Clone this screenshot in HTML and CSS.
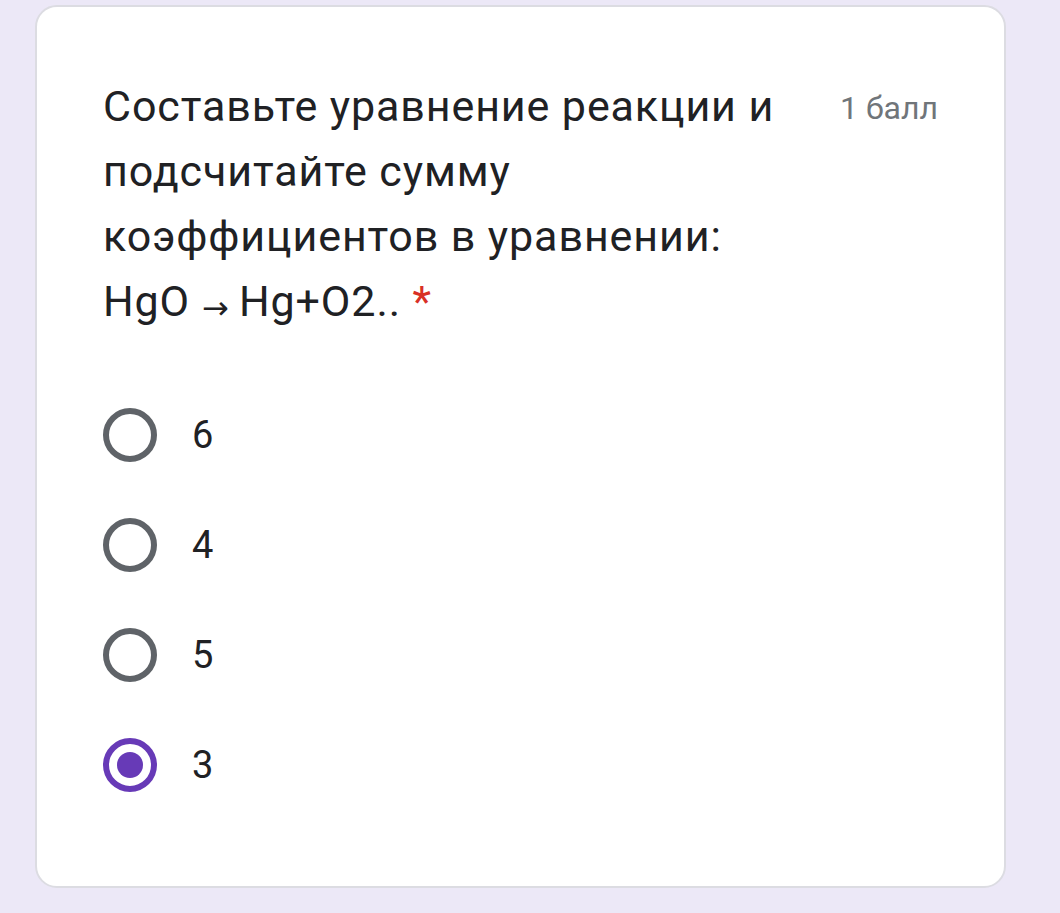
FILE: index.html
```html
<!DOCTYPE html>
<html lang="ru">
<head>
<meta charset="utf-8">
<title>Вопрос</title>
<link rel="stylesheet" href="styles.css">
</head>
<body>
<div class="card">
  <div class="header">
    <div class="title">Составьте уравнение реакции и подсчитайте сумму коэффициентов в уравнении: HgO<span class="arrow">→</span>Hg+O2.. <span class="req">*</span></div>
    <div class="points">1 балл</div>
  </div>
  <div class="options">
    <div class="option"><span class="radio"></span><span class="label">6</span></div>
    <div class="option"><span class="radio"></span><span class="label">4</span></div>
    <div class="option"><span class="radio"></span><span class="label">5</span></div>
    <div class="option"><span class="radio checked"></span><span class="label">3</span></div>
  </div>
</div>
</body>
</html>
```
FILE: styles.css
```css
html, body {
  margin: 0;
  padding: 0;
  background: #ece8f7;
}
body {
  padding: 5px 0 0 35px;
  height: 913px;
  box-sizing: border-box;
}
.card {
  width: 971px;
  height: 883px;
  box-sizing: border-box;
  background: #ffffff;
  border: 2px solid #dcdce2;
  border-radius: 22px;
  padding: 67px 66px 0 66px;
}
.header {
  display: flex;
  justify-content: space-between;
  align-items: flex-start;
}
.title {
  width: 700px;
  font-family: Roboto, "Noto Sans", sans-serif;
  font-size: 43px;
  line-height: 65px;
  letter-spacing: 0.9px;
  color: #202124;
}
.arrow {
  font-family: "DejaVu Sans", sans-serif;
  font-size: 32px;
  line-height: 30px;
  margin: 0 10px 0 12px;
  letter-spacing: 0;
  vertical-align: -3px;
}
.req {
  color: #d93025;
}
.points {
  font-family: Roboto, "Noto Sans", sans-serif;
  font-size: 32px;
  line-height: 40px;
  color: #70757a;
  padding-top: 14px;
}
.options {
  margin-top: 46px;
  display: flex;
  flex-direction: column;
}
.option {
  height: 110px;
  display: flex;
  align-items: center;
}
.radio {
  width: 54px;
  height: 54px;
  box-sizing: border-box;
  border: 6px solid #5f6368;
  border-radius: 50%;
  margin-right: 35px;
  position: relative;
  flex: none;
}
.radio.checked {
  border-color: #673ab7;
}
.radio.checked::after {
  content: "";
  position: absolute;
  left: 8px;
  top: 8px;
  width: 26px;
  height: 26px;
  border-radius: 50%;
  background: #673ab7;
}
.label {
  font-family: Roboto, "Noto Sans", sans-serif;
  font-size: 38px;
  color: #202124;
}
```
